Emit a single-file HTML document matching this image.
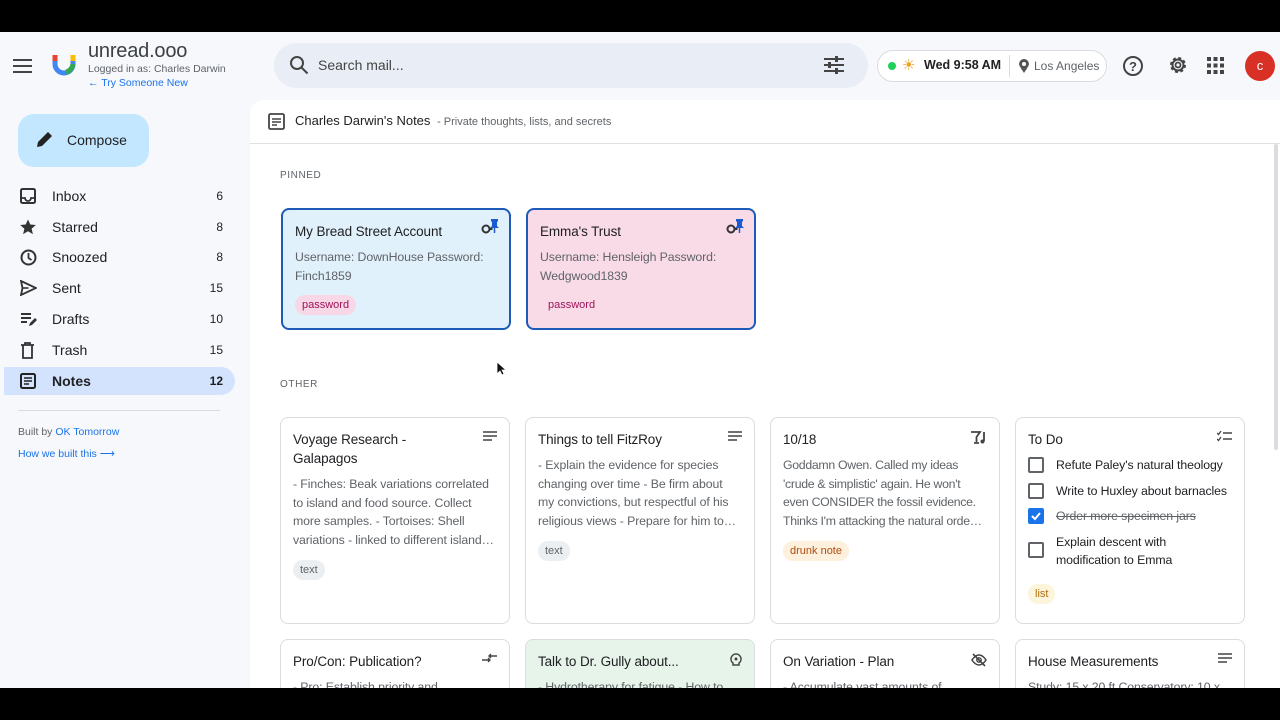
<!DOCTYPE html>
<html><head><meta charset="utf-8"><style>
*{box-sizing:border-box;margin:0;padding:0}
body{width:1280px;height:720px;overflow:hidden;background:#000;font-family:"Liberation Sans",Arial,sans-serif;position:relative;color:#202124}
.app{position:absolute;top:32px;left:0;width:1280px;height:656px;background:#f6f8fc;overflow:hidden}
.abs{position:absolute}
.nav{position:absolute;left:4px;width:231px;height:28px;border-radius:0 14px 14px 0;display:flex;align-items:center;font-size:14px;color:#202124}
.nav svg{position:absolute;left:16px}
.nav .l{position:absolute;left:48px}
.nav .c{position:absolute;right:12px;font-size:12px}
.main{position:absolute;left:250px;top:68px;width:1030px;height:600px;background:#fff;border-radius:14px 0 0 0}
.card{position:absolute;width:230px;border:1px solid #dadce0;border-radius:8px;background:#fff;padding:11px 12px}
.card h3{font-size:13.5px;font-weight:normal;color:#202124;line-height:19px;margin-top:1px;width:170px;letter-spacing:-0.1px}
.card p{font-size:12.3px;color:#5f6368;line-height:18.7px;margin-top:7px;letter-spacing:-0.1px}
.tag{display:inline-block;font-size:11px;padding:4px 7px;border-radius:10px;margin-top:10px}
.ico{position:absolute;right:12px;top:13px}
.todo{display:flex;align-items:flex-start;font-size:12.3px;line-height:18.5px;margin-top:7px;letter-spacing:-0.1px}
.todo span.t{width:180px}
.cb{width:16px;height:16px;border:2px solid #5f6368;border-radius:2px;margin-right:12px;flex:none;margin-top:1px}
</style></head><body>
<div class="app">
<svg class="abs" style="left:13px;top:27px" width="20" height="14"><path d="M0 1h19M0 7h19M0 13h19" stroke="#444" stroke-width="2"/></svg>
<svg class="abs" style="left:50px;top:18px" width="28" height="28"><path d="M5 5v9a9 9 0 0 0 18 0V5" fill="none" stroke="#4285f4" stroke-width="5"/><path d="M5 5v6" stroke="#ea4335" stroke-width="5"/><path d="M23 5v6" stroke="#fbbc05" stroke-width="5"/><path d="M16 22a9 9 0 0 0 7-8" fill="none" stroke="#34a853" stroke-width="5"/></svg>
<div class="abs" style="left:88px;top:8px;font-size:20px;color:#3c4043;letter-spacing:-0.2px">unread.ooo</div>
<div class="abs" style="left:88px;top:31px;font-size:10.5px;color:#5f6368">Logged in as: Charles Darwin</div>
<div class="abs" style="left:88px;top:45px;font-size:10.5px;color:#1a73e8">← Try Someone New</div>
<div class="abs" style="left:274px;top:11px;width:594px;height:45px;border-radius:23px;background:#e9eef6"></div>
<svg class="abs" style="left:289px;top:23px" width="20" height="20"><circle cx="8" cy="8" r="6" fill="none" stroke="#444" stroke-width="2"/><path d="M12.5 12.5l6 6" stroke="#444" stroke-width="2"/></svg>
<div class="abs" style="left:318px;top:25px;font-size:14px;color:#444">Search mail...</div>
<svg class="abs" style="left:824px;top:24px" width="20" height="18"><path d="M0 3h20M0 9h20M0 15h20" stroke="#444" stroke-width="2"/><rect x="11" y="0" width="3" height="6" fill="#444"/><rect x="4" y="6" width="3" height="6" fill="#444"/><rect x="11" y="12" width="3" height="6" fill="#444"/></svg>
<div class="abs" style="left:877px;top:18px;width:230px;height:32px;border:1px solid #dadce0;border-radius:16px;background:#fff"></div>
<div class="abs" style="left:888px;top:30px;width:8px;height:8px;border-radius:50%;background:#1ed05a"></div>
<div class="abs" style="left:902px;top:24px;font-size:15px;color:#f0a020">☀</div>
<div class="abs" style="left:924px;top:26px;font-size:12.5px;font-weight:bold;color:#202124">Wed 9:58 AM</div>
<div class="abs" style="left:1009px;top:23px;width:1px;height:22px;background:#dadce0"></div>
<svg class="abs" style="left:1019px;top:27px" width="10" height="14"><path d="M5 14C1 8 0 6 0 5a5 5 0 0 1 10 0c0 1-1 3-5 9z" fill="#555"/><circle cx="5" cy="5" r="2" fill="#fff"/></svg>
<div class="abs" style="left:1034px;top:27px;font-size:12px;color:#5f6368">Los Angeles</div>
<svg class="abs" style="left:1122px;top:23px" width="22" height="22"><circle cx="11" cy="11" r="9" fill="none" stroke="#444" stroke-width="2"/><text x="11" y="16" font-size="13" text-anchor="middle" fill="#444" font-family="Liberation Sans" font-weight="bold">?</text></svg>
<svg class="abs" style="left:1167px;top:22px" width="22" height="22"><circle cx="11" cy="11" r="7" fill="none" stroke="#444" stroke-width="2" stroke-dasharray="3 2.5"/><circle cx="11" cy="11" r="5.5" fill="none" stroke="#444" stroke-width="2"/><circle cx="11" cy="11" r="2.5" fill="none" stroke="#444" stroke-width="1.8"/></svg>
<svg class="abs" style="left:1207px;top:25px" width="17" height="17" fill="#444"><rect x="0" y="0" width="4" height="4"/><rect x="6.5" y="0" width="4" height="4"/><rect x="13" y="0" width="4" height="4"/><rect x="0" y="6.5" width="4" height="4"/><rect x="6.5" y="6.5" width="4" height="4"/><rect x="13" y="6.5" width="4" height="4"/><rect x="0" y="13" width="4" height="4"/><rect x="6.5" y="13" width="4" height="4"/><rect x="13" y="13" width="4" height="4"/></svg>
<div class="abs" style="left:1245px;top:19px;width:30px;height:30px;border-radius:50%;background:#d93025;color:#fff;font-size:13px;text-align:center;line-height:30px">c</div>

<div class="abs" style="left:18px;top:82px;width:131px;height:53px;border-radius:16px;background:#c2e7ff"></div>
<svg class="abs" style="left:35px;top:99px" width="18" height="18"><path d="M2 16l1-5L13 1l4 4L7 15z" fill="#222"/></svg>
<div class="abs" style="left:67px;top:100px;font-size:14px;color:#202124">Compose</div>
<div class="nav" style="top:150px"><svg width="16" height="16"><rect x="1" y="1" width="14" height="14" rx="1.5" fill="none" stroke="#333" stroke-width="2"/><path d="M1 10h4a3 3 0 0 0 6 0h4" fill="none" stroke="#333" stroke-width="1.8"/></svg><span class="l">Inbox</span><span class="c">6</span></div>
<div class="nav" style="top:181px"><svg width="16" height="16"><path d="M8 0.5l2.3 5 5.5.5-4.2 3.7 1.3 5.4L8 12.3 3.1 15.1l1.3-5.4L.2 6l5.5-.5z" fill="#333"/></svg><span class="l">Starred</span><span class="c">8</span></div>
<div class="nav" style="top:211px"><svg width="17" height="17"><circle cx="8.5" cy="8.5" r="7" fill="none" stroke="#333" stroke-width="2"/><path d="M8.5 4v5l3 2" fill="none" stroke="#333" stroke-width="1.8"/></svg><span class="l">Snoozed</span><span class="c">8</span></div>
<div class="nav" style="top:242px"><svg width="17" height="16"><path d="M1 1l15 7-15 7 1.5-7z" fill="none" stroke="#333" stroke-width="1.8"/><path d="M2.5 8h6" stroke="#333" stroke-width="1.6"/></svg><span class="l">Sent</span><span class="c">15</span></div>
<div class="nav" style="top:273px"><svg width="17" height="16"><path d="M1 3h10M1 7h10M1 11h6" stroke="#333" stroke-width="2"/><path d="M9 15l1-3 5-5 2 2-5 5z" fill="#333"/></svg><span class="l">Drafts</span><span class="c">10</span></div>
<div class="nav" style="top:304px"><svg width="15" height="17"><path d="M1 3h13M5 3V1h5v2M3 3v13h9V3" fill="none" stroke="#333" stroke-width="1.8"/></svg><span class="l">Trash</span><span class="c">15</span></div>
<div class="nav" style="top:335px;background:#d3e3fd;font-weight:bold"><svg width="16" height="16"><rect x="1" y="1" width="14" height="14" rx="1.5" fill="none" stroke="#222" stroke-width="2"/><path d="M4 5h8M4 8h8M4 11h5" stroke="#222" stroke-width="1.6"/></svg><span class="l">Notes</span><span class="c">12</span></div>
<div class="abs" style="left:18px;top:378px;width:202px;height:1px;background:#dadce0"></div>
<div class="abs" style="left:18px;top:394px;font-size:10.5px;color:#5f6368">Built by <span style="color:#1a73e8">OK Tomorrow</span></div>
<div class="abs" style="left:18px;top:416px;font-size:10.5px;color:#1a73e8">How we built this ⟶</div>

<div class="main">
<div class="abs" style="left:0;top:43px;width:1030px;height:1px;background:#e0e0e0"></div>
<svg class="abs" style="left:18px;top:13px" width="17" height="17"><rect x="1" y="1" width="15" height="15" rx="1.5" fill="none" stroke="#444" stroke-width="1.8"/><path d="M4 6h9M4 9h9M4 12h5" stroke="#444" stroke-width="1.5"/></svg>
<div class="abs" style="left:45px;top:13px;font-size:13px;color:#202124">Charles Darwin's Notes <span style="font-size:11px;color:#5f6368">&nbsp;- Private thoughts, lists, and secrets</span></div>
<div class="abs" style="left:1024px;top:44px;width:4px;height:306px;background:#dadce0;border-radius:2px"></div>
<div class="abs" style="left:30px;top:70px;font-size:10px;letter-spacing:.6px;color:#5f6368">PINNED</div>
<div class="abs" style="left:30px;top:279px;font-size:10px;letter-spacing:.6px;color:#5f6368">OTHER</div>

<div class="card" style="left:31px;top:108px;height:122px;background:#e1f1fb;border:2px solid #1e5bb8">
<h3>My Bread Street Account</h3><p>Username: DownHouse Password: Finch1859</p><span class="tag" style="background:#f8d7e6;color:#a0135a">password</span>
<svg class="ico" style="top:9px;right:10px" width="18" height="16"><circle cx="5" cy="10" r="3.5" fill="none" stroke="#333" stroke-width="2"/><path d="M8.5 10h3" stroke="#333" stroke-width="2"/><path d="M10 0h7v2l-1 1v4l2 2H9l2-2V3l-1-1z" fill="#1a5cd0"/><path d="M13.5 9v5" stroke="#1a5cd0" stroke-width="1.5"/></svg></div>
<div class="card" style="left:276px;top:108px;height:122px;background:#f9dbe7;border:2px solid #1e5bb8">
<h3>Emma's Trust</h3><p>Username: Hensleigh Password: Wedgwood1839</p><span class="tag" style="color:#a0135a;padding-left:8px">password</span>
<svg class="ico" style="top:9px;right:10px" width="18" height="16"><circle cx="5" cy="10" r="3.5" fill="none" stroke="#333" stroke-width="2"/><path d="M8.5 10h3" stroke="#333" stroke-width="2"/><path d="M10 0h7v2l-1 1v4l2 2H9l2-2V3l-1-1z" fill="#1a5cd0"/><path d="M13.5 9v5" stroke="#1a5cd0" stroke-width="1.5"/></svg></div>

<div class="card" style="left:30px;top:317px;height:207px">
<h3>Voyage Research - Galapagos</h3><p>- Finches: Beak variations correlated to island and food source. Collect more samples. - Tortoises: Shell variations - linked to different island…</p><span class="tag" style="background:#eceff1;color:#5f6368">text</span>
<svg class="ico" width="14" height="11"><path d="M0 1h14M0 5h14M0 9h9" stroke="#444" stroke-width="1.6"/></svg></div>
<div class="card" style="left:275px;top:317px;height:207px">
<h3>Things to tell FitzRoy</h3><p>- Explain the evidence for species changing over time - Be firm about my convictions, but respectful of his religious views - Prepare for him to…</p><span class="tag" style="background:#eceff1;color:#5f6368">text</span>
<svg class="ico" width="14" height="11"><path d="M0 1h14M0 5h14M0 9h9" stroke="#444" stroke-width="1.6"/></svg></div>
<div class="card" style="left:520px;top:317px;height:207px">
<h3>10/18</h3><p style="letter-spacing:-0.3px">Goddamn Owen. Called my ideas 'crude &amp; simplistic' again. He won't even CONSIDER the fossil evidence. Thinks I'm attacking the natural orde…</p><span class="tag" style="background:#fdf0dc;color:#b04a10">drunk note</span>
<svg class="ico" width="16" height="13"><path d="M0 1h9L5.5 6v5M3 12h5" fill="none" stroke="#444" stroke-width="1.8"/><path d="M13 1v9" stroke="#444" stroke-width="1.8"/><circle cx="11.5" cy="10.5" r="2" fill="#444"/></svg></div>
<div class="card" style="left:765px;top:317px;height:207px">
<h3>To Do</h3>
<div style="margin-top:6px"></div>
<div class="todo"><span class="cb"></span><span class="t">Refute Paley's natural theology</span></div>
<div class="todo"><span class="cb"></span><span class="t">Write to Huxley about barnacles</span></div>
<div class="todo"><span class="cb" style="background:#1a73e8;border-color:#1a73e8;position:relative"><svg style="position:absolute;left:0;top:0" width="12" height="12"><path d="M2 6l3 3 5-6" fill="none" stroke="#fff" stroke-width="2"/></svg></span><s style="color:#5f6368">Order more specimen jars</s></div>
<div class="todo"><span class="cb" style="margin-top:9px"></span><span class="t" style="width:160px">Explain descent with modification to Emma</span></div>
<span class="tag" style="background:#fdf4dc;color:#b0700a;margin-top:14px">list</span>
<svg class="ico" width="15" height="12"><path d="M0 2l1.5 1.5L4 0M0 8l1.5 1.5L4 6" fill="none" stroke="#444" stroke-width="1.3"/><path d="M6 2h9M6 8h9" stroke="#444" stroke-width="1.5"/></svg></div>

<div class="card" style="left:30px;top:539px;height:100px"><h3>Pro/Con: Publication?</h3><p>- Pro: Establish priority and</p>
<svg class="ico" width="15" height="10"><path d="M0 7h8M6 5l2 2-2 2M15 3H7M9 1L7 3l2 2" fill="none" stroke="#444" stroke-width="1.4"/></svg></div>
<div class="card" style="left:275px;top:539px;height:100px;background:#e6f4ea"><h3>Talk to Dr. Gully about...</h3><p>- Hydrotherapy for fatigue - How to</p>
<svg class="ico" width="12" height="14"><path d="M6 1a5 5 0 0 0-3 9v2h6v-2a5 5 0 0 0-3-9z" fill="none" stroke="#444" stroke-width="1.5"/><circle cx="6" cy="6" r="1.5" fill="#444"/></svg></div>
<div class="card" style="left:520px;top:539px;height:100px"><h3>On Variation - Plan</h3><p>- Accumulate vast amounts of</p>
<svg class="ico" width="16" height="14"><path d="M1 7s3-5 7-5 7 5 7 5-3 5-7 5-7-5-7-5z" fill="none" stroke="#444" stroke-width="1.5"/><circle cx="8" cy="7" r="2.2" fill="none" stroke="#444" stroke-width="1.4"/><path d="M2 1l12 12" stroke="#444" stroke-width="1.6"/></svg></div>
<div class="card" style="left:765px;top:539px;height:100px"><h3>House Measurements</h3><p>Study: 15 x 20 ft Conservatory: 10 x 12</p>
<svg class="ico" width="14" height="11"><path d="M0 1h14M0 5h14M0 9h9" stroke="#444" stroke-width="1.6"/></svg></div>
</div>
<svg class="abs" style="left:496px;top:329px" width="10" height="16"><path d="M1 1v12l3-3 2 4 2-1-2-4h4z" fill="#111" stroke="#fff" stroke-width="0.8"/></svg>
</div>
</body></html>
